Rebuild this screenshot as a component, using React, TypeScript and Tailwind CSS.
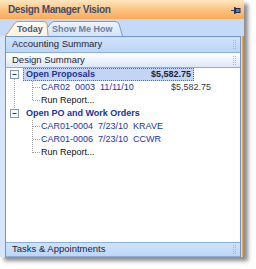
import React from "react";

function Pin() {
  return (
    <svg width="10" height="8" viewBox="0 0 10 8" className="mr-[1px]">
      <line x1="0" y1="4.5" x2="3" y2="4.5" stroke="#2a3a66" strokeWidth="1" />
      <rect x="3" y="1" width="1.6" height="7" fill="#2a3a66" />
      <rect x="4.5" y="2.5" width="4.5" height="4" fill="#5a7ab8" stroke="#1f2d55" strokeWidth="1" />
    </svg>
  );
}

function Grip() {
  return (
    <svg width="4" height="9" viewBox="0 0 4 9">
      {[0, 2, 4, 6, 8].map((y) => (
        <g key={y}>
          <rect x="0" y={y} width="1" height="1" fill="#a4b8d6" />
          <rect x="2" y={y} width="1" height="1" fill="#a4b8d6" />
        </g>
      ))}
    </svg>
  );
}

function Tabs() {
  return (
    <div className="relative h-[17px] w-[130px]">
      <svg className="absolute left-0 top-0" width="130" height="17" viewBox="0 0 130 17">
        <defs>
          <linearGradient id="gTab2" x1="0" y1="0" x2="0" y2="1">
            <stop offset="0" stopColor="#eef4fd" />
            <stop offset="1" stopColor="#d3e3fa" />
          </linearGradient>
          <linearGradient id="gTab1" x1="0" y1="0" x2="0" y2="1">
            <stop offset="0" stopColor="#fffdf8" />
            <stop offset="1" stopColor="#fdf1dc" />
          </linearGradient>
        </defs>
        <path
          d="M36.5 17 L46 4 Q47.5 2.5 50 2.5 L110 2.5 Q113 2.5 114 5 L117.5 17"
          fill="url(#gTab2)"
          stroke="#7e9ccb"
          strokeWidth="1"
        />
        <path
          d="M0.5 17 L10 4 Q11.5 2.5 14 2.5 L39 2.5 Q41.5 2.5 42 5 L43 17"
          fill="url(#gTab1)"
          stroke="#d29a55"
          strokeWidth="1"
        />
      </svg>
      <span className="absolute left-[12px] top-[4px] text-[9px] leading-[12px] font-bold text-[#4a5a7a]">
        Today
      </span>
      <span className="absolute left-[47px] top-[4px] text-[9px] leading-[12px] font-bold text-[#6e80a2]">
        Show Me How
      </span>
    </div>
  );
}

function TreeLines() {
  const dot = { stroke: "#a3a3a3", strokeWidth: 1, strokeDasharray: "1 1" };
  return (
    <svg className="absolute left-0 top-0" width="200" height="100" viewBox="0 0 200 100">
      <line x1="8.5" y1="11" x2="8.5" y2="41" {...dot} />
      <line x1="26.5" y1="13" x2="26.5" y2="33" {...dot} />
      <line x1="27" y1="19.5" x2="34" y2="19.5" {...dot} />
      <line x1="27" y1="32.5" x2="34" y2="32.5" {...dot} />
      <line x1="26.5" y1="52" x2="26.5" y2="85" {...dot} />
      <line x1="27" y1="58.5" x2="34" y2="58.5" {...dot} />
      <line x1="27" y1="71.5" x2="34" y2="71.5" {...dot} />
      <line x1="27" y1="84.5" x2="34" y2="84.5" {...dot} />
      {[2, 41].map((y) => (
        <g key={y}>
          <rect x="4.5" y={y + 0.5} width="8" height="8" fill="#f7f9fc" stroke="#8498b8" strokeWidth="1" />
          <line x1="6.5" y1={y + 4.5} x2="10.5" y2={y + 4.5} stroke="#2a3a6a" strokeWidth="1" />
        </g>
      ))}
    </svg>
  );
}

export default function App() {
  const font = { fontFamily: '"Liberation Sans", Arial, sans-serif' };
  return (
    <div className="w-[256px] h-[269px] bg-white" style={font}>
      <div className="w-[244px] h-[257px] flex flex-col bg-[#c5dbf8] shadow-[4px_4px_4px_rgba(0,0,0,0.45)]">
        <div className="h-[19px] flex items-center justify-between pl-[8px] pr-[2px] bg-gradient-to-b from-[#fee6c0] via-[#fcc583] to-[#fba854]">
          <span className="text-[10px] font-bold text-[#3e4d6b] tracking-[-0.35px]">Design Manager Vision</span>
          <Pin />
        </div>
        <div className="h-[17px] flex items-end pl-[5px] bg-[#c4daf8]">
          <Tabs />
        </div>
        <div className="flex-1 flex">
          <div className="w-[5px] bg-[#d6e5f9]" />
          <div className="flex-1 flex flex-col bg-white border-l border-t border-r border-[#6f95cc]">
            <div className="h-[16px] flex items-center justify-between pl-[6px] pr-[3px] bg-gradient-to-b from-[#d0e3fb] to-[#bcd5f6] border-b border-[#8eaedb]">
              <span className="text-[9.5px] text-[#1d2535]">Accounting Summary</span>
              <Grip />
            </div>
            <div className="h-[15px] flex items-center justify-between pl-[6px] pr-[3px] bg-gradient-to-b from-[#ffffff] to-[#dbe8fa] border-b border-[#8eaedb]">
              <span className="text-[9.5px] text-[#1d2535]">Design Summary</span>
              <Grip />
            </div>
            <div className="flex-1 relative text-[9px] leading-[13px]">
              <TreeLines />
              <div className="relative flex flex-col">
                <div className="h-[13px] pl-[17px] flex">
                  <div className="w-[171px] h-[13px] flex justify-between items-center px-[2px] bg-[#c3d5f4] border border-dotted border-[#5d6f95]">
                    <span className="font-bold text-[#1b3399]">Open Proposals</span>
                    <span className="font-bold text-[#1c2232]">$5,582.75</span>
                  </div>
                </div>
                <div className="h-[13px] pl-[35px] flex items-center">
                  <span className="w-[130px] text-[#2535a5] whitespace-pre">CAR02  0003  11/11/10</span>
                  <span className="text-[#3a3a3a]">$5,582.75</span>
                </div>
                <div className="h-[13px] pl-[35px] flex items-center text-[#111]">Run Report...</div>
                <div className="h-[13px] pl-[20px] flex items-center font-bold text-[#1b3399]">Open PO and Work Orders</div>
                <div className="h-[13px] pl-[35px] flex items-center text-[#2535a5] whitespace-pre">CAR01-0004  7/23/10  KRAVE</div>
                <div className="h-[13px] pl-[35px] flex items-center text-[#2535a5] whitespace-pre">CAR01-0006  7/23/10  CCWR</div>
                <div className="h-[13px] pl-[35px] flex items-center text-[#111]">Run Report...</div>
              </div>
            </div>
            <div className="h-[15px] flex items-center justify-between pl-[6px] pr-[3px] bg-gradient-to-b from-[#cfe2fb] to-[#bdd6f7] border-t border-b border-[#8eaedb]">
              <span className="text-[9.5px] text-[#1d2535]">Tasks &amp; Appointments</span>
              <Grip />
            </div>
          </div>
          <div className="w-[1px] bg-[#c5dbf8]" />
          <div className="w-[1px] bg-[#f0a848]" />
          <div className="w-[1px] bg-[#7497cb]" />
        </div>
      </div>
    </div>
  );
}
